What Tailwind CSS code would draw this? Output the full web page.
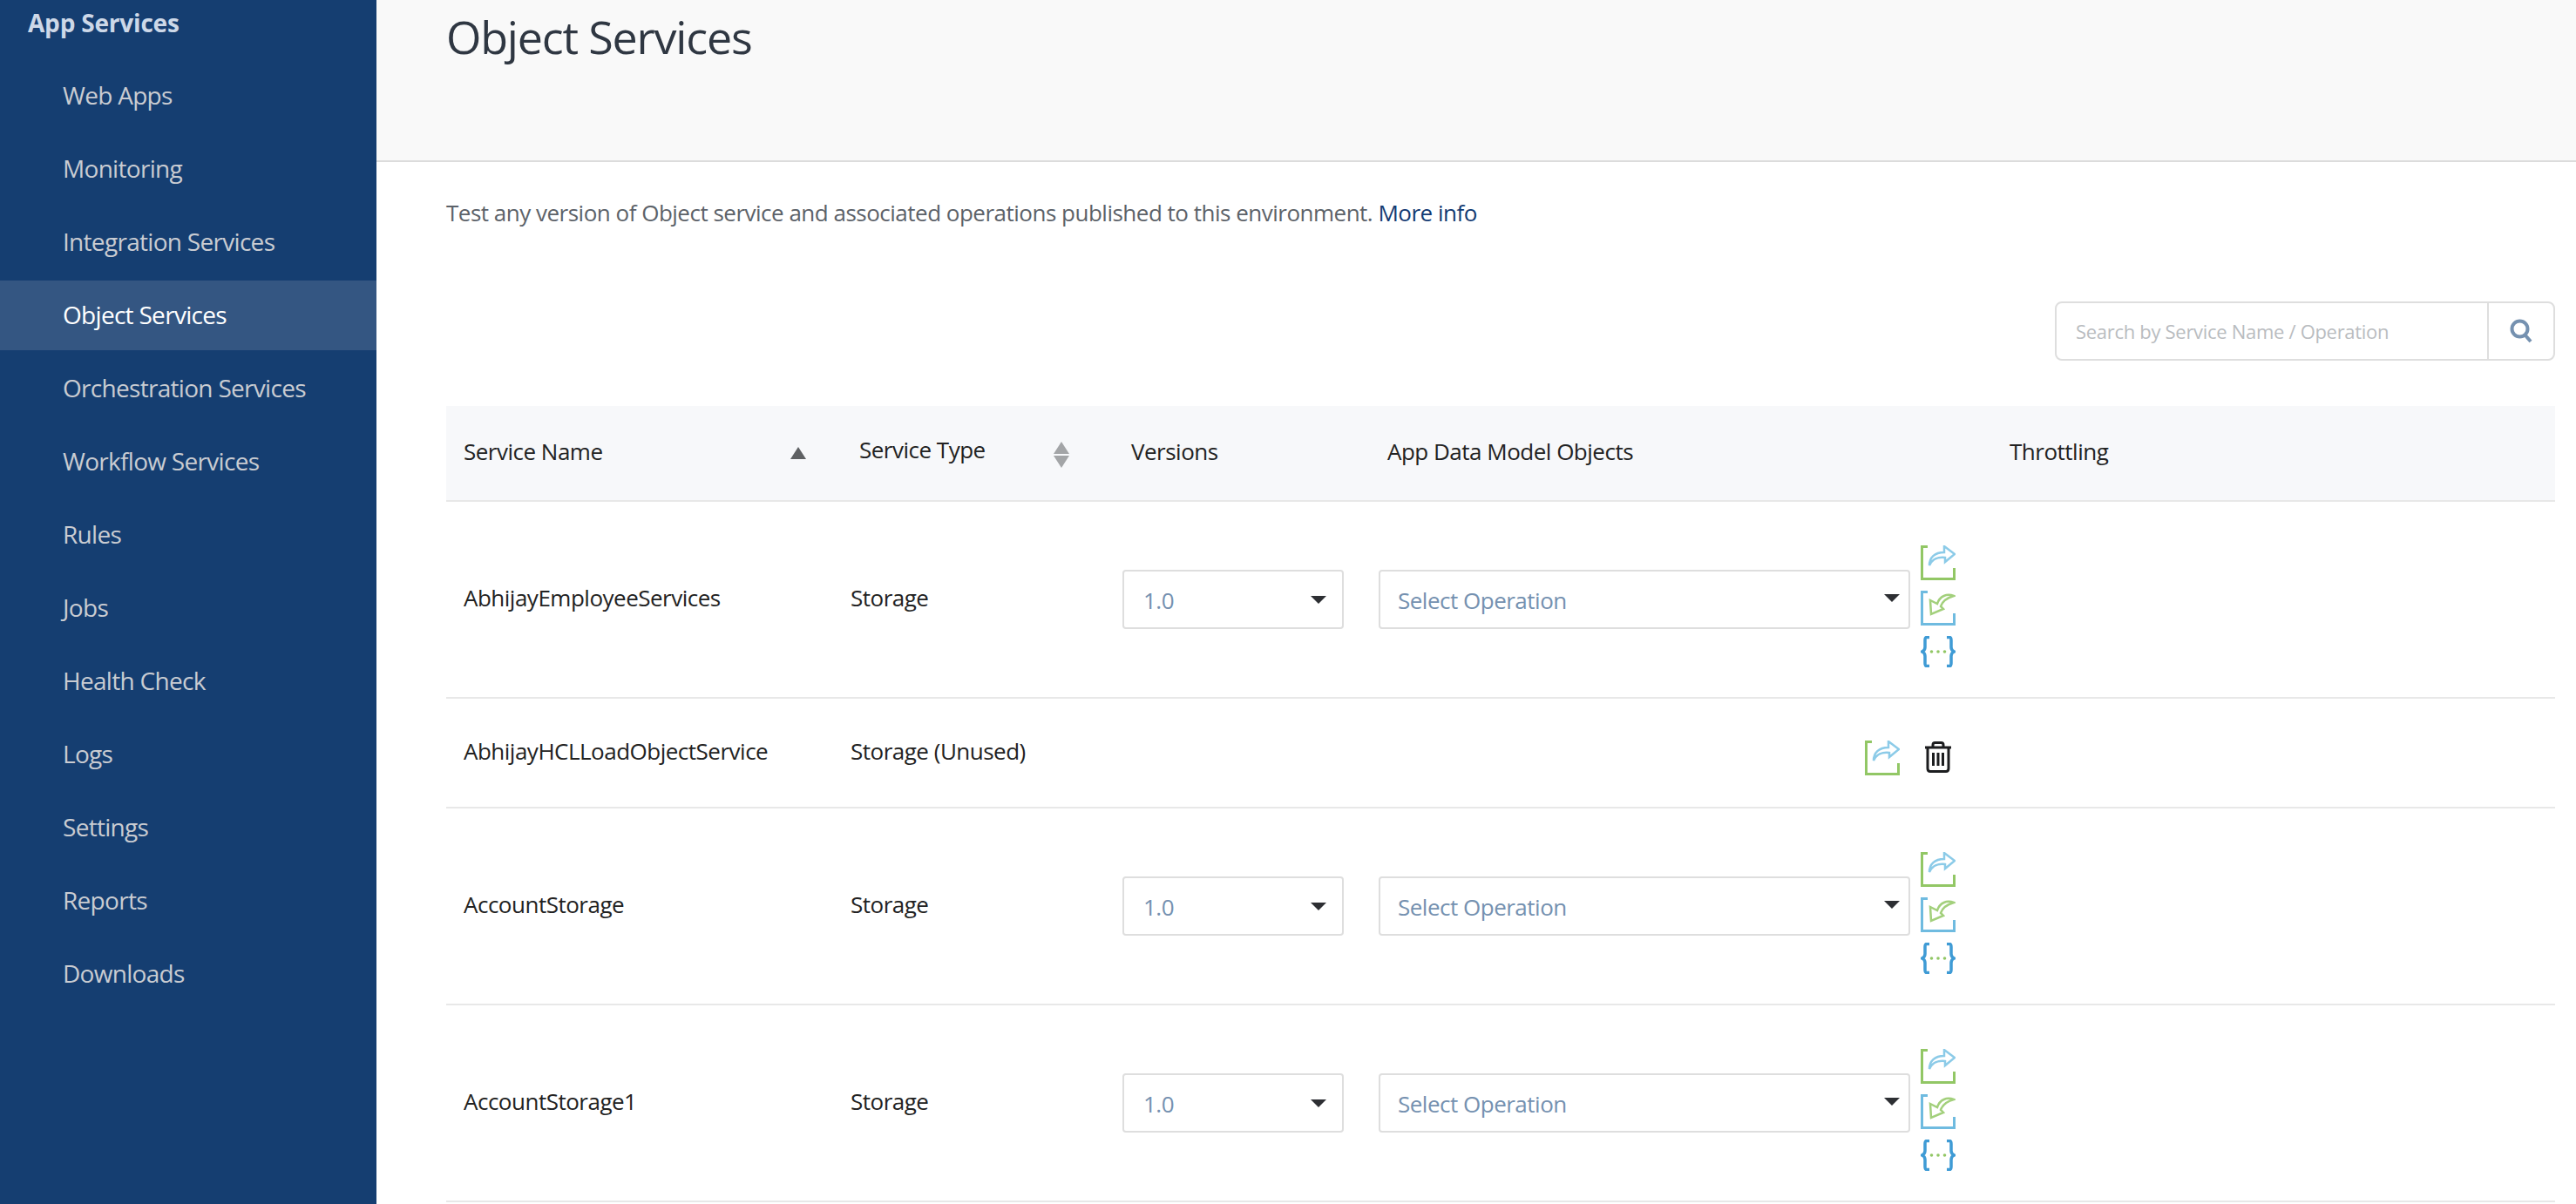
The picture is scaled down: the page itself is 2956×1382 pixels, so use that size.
<!DOCTYPE html>
<html lang="en">
<head>
    <meta charset="UTF-8">
    <meta name="viewport" content="width=device-width, initial-scale=1.0">
    <title>Object Services</title>
    <script src="https://cdn.jsdelivr.net/npm/@tailwindcss/browser@4"></script>
</head>
<body class="w-screen h-screen overflow-hidden flex bg-white font-['Open_Sans',sans-serif]">
    <svg class="hidden">
        <symbol id="push" viewBox="0 0 40 40">
            <path d="M8 1.500H1.500V38.500H38.500V26" fill="none" stroke="#92c765" stroke-width="3"/>
            <path d="M10 23C10 14 16 8 27 8V1L39 10L28 19V14C20 13 13 16 10 23Z" fill="none" stroke="#8ccbe8" stroke-width="2.500"/>
        </symbol>
        <symbol id="pull" viewBox="0 0 40 40">
            <path d="M8 1.500H1.500V38.500H38.500V26" fill="none" stroke="#6fbbe0" stroke-width="3"/>
            <path d="M38 6C30 3 22 6 19 15L11 11L12 27L26 21L23 18C25 12 31 8 38 6Z" fill="none" stroke="#a3d07c" stroke-width="2.500"/>
        </symbol>
        <symbol id="json" viewBox="0 0 40 36">
            <path d="M10 1.500H7C5 1.500 5 3 5 5V13C5 16 4 17 1.500 18C4 19 5 20 5 23V31C5 33 5 34.500 7 34.500H10M30 1.500H33C35 1.500 35 3 35 5V13C35 16 36 17 38.500 18C36 19 35 20 35 23V31C35 33 35 34.500 33 34.500H30" fill="none" stroke="#3f9bd5" stroke-width="3.500"/>
            <circle cx="12.500" cy="18" r="1.800" fill="#92c765"/>
            <circle cx="20" cy="18" r="1.800" fill="#92c765"/>
            <circle cx="27.500" cy="18" r="1.800" fill="#92c765"/>
        </symbol>
        <symbol id="caret" viewBox="0 0 18 9">
            <path d="M0 0H18L9 9Z" fill="#2d2f33"/>
        </symbol>
    </svg>

    <aside class="w-[432px] h-full shrink-0 bg-[#153e71] text-[28px] tracking-[-0.7px]">
        <div class="h-[52px] pl-[32px] flex items-center font-bold text-[#cdd8e8] tracking-[-0.2px]">App Services</div>
        <ul class="pt-[18px] text-[#c9ccd2]">
            <li class="h-[84px] pb-[6px] pl-[72px] flex items-center">Web Apps</li>
            <li class="h-[84px] pb-[6px] pl-[72px] flex items-center">Monitoring</li>
            <li class="h-[84px] pb-[6px] pl-[72px] flex items-center">Integration Services</li>
            <li class="h-[80px] mb-[4px] pb-[2px] pl-[72px] flex items-center bg-[#345682] text-white">Object Services</li>
            <li class="h-[84px] pb-[6px] pl-[72px] flex items-center">Orchestration Services</li>
            <li class="h-[84px] pb-[6px] pl-[72px] flex items-center">Workflow Services</li>
            <li class="h-[84px] pb-[6px] pl-[72px] flex items-center">Rules</li>
            <li class="h-[84px] pb-[6px] pl-[72px] flex items-center">Jobs</li>
            <li class="h-[84px] pb-[6px] pl-[72px] flex items-center">Health Check</li>
            <li class="h-[84px] pb-[6px] pl-[72px] flex items-center">Logs</li>
            <li class="h-[84px] pb-[6px] pl-[72px] flex items-center">Settings</li>
            <li class="h-[84px] pb-[6px] pl-[72px] flex items-center">Reports</li>
            <li class="h-[84px] pb-[6px] pl-[72px] flex items-center">Downloads</li>
        </ul>
    </aside>

    <main class="flex-1 min-w-0">
        <div class="h-[186px] pl-[80px] pt-[6px] bg-[#f9f9f9] border-b-2 border-[#dcdcdc]">
            <h1 class="text-[52px] leading-[72px] tracking-[-1.2px] text-[#2f3742]">Object Services</h1>
        </div>
        <div class="pl-[80px] pr-[24px]">
            <p class="pt-[40px] text-[26px] leading-[36px] tracking-[-0.5px] text-[#5c6269]">Test any version of Object service and associated operations published to this environment. <span class="text-[#123a72]">More info</span></p>

            <div class="mt-[84px] flex justify-end">
                <div class="w-[574px] h-[68px] flex border-2 border-[#dedede] rounded-[8px]">
                    <div class="flex-1 pl-[22px] flex items-center text-[22px] tracking-[-0.3px] text-[#b9bcbf]">Search by Service Name / Operation</div>
                    <div class="w-[76px] flex items-center justify-center border-l-2 border-[#dedede]">
                        <svg class="w-[26px] h-[28px]" viewBox="0 0 26 28" fill="none" stroke="#7591b0"><circle cx="11.500" cy="11.500" r="9" stroke-width="4"/><path d="M18 19L24 26" stroke-width="4"/></svg>
                    </div>
                </div>
            </div>

            <div class="mt-[52px] h-[110px] flex items-center bg-[#f7f8fa] border-b-2 border-[#e8e8e8] text-[26px] tracking-[-0.5px] text-[#222]">
                <div class="w-[395px] pl-[20px] pb-[3px]">Service Name</div>
                <svg class="w-[18px] h-[14px]" viewBox="0 0 18 14"><path d="M9 0L18 14H0Z" fill="#5f6163"/></svg>
                <div class="w-[61px]"></div>
                <div class="w-[223px] pb-[7px]">Service Type</div>
                <svg class="w-[18px] h-[30px] mt-[4px]" viewBox="0 0 18 30"><path d="M9 0L18 14H0Z" fill="#a3a5a7"/><path d="M0 16H18L9 30Z" fill="#a3a5a7"/></svg>
                <div class="w-[71px]"></div>
                <div class="w-[294px] pb-[3px]">Versions</div>
                <div class="w-[714px] pb-[3px]">App Data Model Objects</div>
                <div class="pb-[3px]">Throttling</div>
            </div>

            <div class="h-[226px] flex items-center border-b-2 border-[#e8e8e8] text-[26px] tracking-[-0.5px] text-[#222]">
                <div class="w-[464px] pl-[20px] pb-[4px]">AbhijayEmployeeServices</div>
                <div class="w-[312px] pb-[4px]">Storage</div>
                <div class="w-[254px] h-[68px] pl-[22px] pr-[18px] flex items-center justify-between border-2 border-[#dedede] rounded-[4px] text-[#7591b0]"><span class="pt-[2px]">1.0</span><svg class="w-[18px] h-[9px]"><use href="#caret"/></svg></div>
                <div class="w-[610px] h-[68px] ml-[40px] pl-[20px] pr-[10px] flex items-center justify-between border-2 border-[#dedede] rounded-[4px] text-[#7591b0]"><span class="pt-[2px]">Select Operation</span><svg class="w-[18px] h-[9px] -mt-[4px]"><use href="#caret"/></svg></div>
                <div class="ml-[12px] mt-[16px] flex flex-col gap-[12px]">
                    <svg class="w-[40px] h-[40px]"><use href="#push"/></svg>
                    <svg class="w-[40px] h-[40px]"><use href="#pull"/></svg>
                    <svg class="w-[40px] h-[36px]"><use href="#json"/></svg>
                </div>
            </div>

            <div class="h-[126px] flex items-center border-b-2 border-[#e8e8e8] text-[26px] tracking-[-0.5px] text-[#222]">
                <div class="w-[464px] pl-[20px] pb-[4px]">AbhijayHCLLoadObjectService</div>
                <div class="w-[1164px] pb-[4px]">Storage (Unused)</div>
                <svg class="w-[40px] h-[40px] mt-[12px]"><use href="#push"/></svg>
                <svg class="w-[32px] h-[36px] ml-[28px] mt-[10px]" viewBox="0 0 32 36" fill="none" stroke="#1c1d1f" stroke-width="3"><path d="M1 7H31"/><path d="M10 7V4C10 2.500 11 1.500 12.500 1.500H19.500C21 1.500 22 2.500 22 4V7"/><path d="M4 7V31C4 33 5 34.500 7 34.500H25C27 34.500 28 33 28 31V7"/><path d="M10.500 13V28M16 13V28M21.500 13V28"/></svg>
            </div>

            <div class="h-[226px] flex items-center border-b-2 border-[#e8e8e8] text-[26px] tracking-[-0.5px] text-[#222]">
                <div class="w-[464px] pl-[20px] pb-[4px]">AccountStorage</div>
                <div class="w-[312px] pb-[4px]">Storage</div>
                <div class="w-[254px] h-[68px] pl-[22px] pr-[18px] flex items-center justify-between border-2 border-[#dedede] rounded-[4px] text-[#7591b0]"><span class="pt-[2px]">1.0</span><svg class="w-[18px] h-[9px]"><use href="#caret"/></svg></div>
                <div class="w-[610px] h-[68px] ml-[40px] pl-[20px] pr-[10px] flex items-center justify-between border-2 border-[#dedede] rounded-[4px] text-[#7591b0]"><span class="pt-[2px]">Select Operation</span><svg class="w-[18px] h-[9px] -mt-[4px]"><use href="#caret"/></svg></div>
                <div class="ml-[12px] mt-[16px] flex flex-col gap-[12px]">
                    <svg class="w-[40px] h-[40px]"><use href="#push"/></svg>
                    <svg class="w-[40px] h-[40px]"><use href="#pull"/></svg>
                    <svg class="w-[40px] h-[36px]"><use href="#json"/></svg>
                </div>
            </div>

            <div class="h-[226px] flex items-center border-b-2 border-[#e8e8e8] text-[26px] tracking-[-0.5px] text-[#222]">
                <div class="w-[464px] pl-[20px] pb-[4px]">AccountStorage1</div>
                <div class="w-[312px] pb-[4px]">Storage</div>
                <div class="w-[254px] h-[68px] pl-[22px] pr-[18px] flex items-center justify-between border-2 border-[#dedede] rounded-[4px] text-[#7591b0]"><span class="pt-[2px]">1.0</span><svg class="w-[18px] h-[9px]"><use href="#caret"/></svg></div>
                <div class="w-[610px] h-[68px] ml-[40px] pl-[20px] pr-[10px] flex items-center justify-between border-2 border-[#dedede] rounded-[4px] text-[#7591b0]"><span class="pt-[2px]">Select Operation</span><svg class="w-[18px] h-[9px] -mt-[4px]"><use href="#caret"/></svg></div>
                <div class="ml-[12px] mt-[16px] flex flex-col gap-[12px]">
                    <svg class="w-[40px] h-[40px]"><use href="#push"/></svg>
                    <svg class="w-[40px] h-[40px]"><use href="#pull"/></svg>
                    <svg class="w-[40px] h-[36px]"><use href="#json"/></svg>
                </div>
            </div>
        </div>
    </main>
</body>
</html>
